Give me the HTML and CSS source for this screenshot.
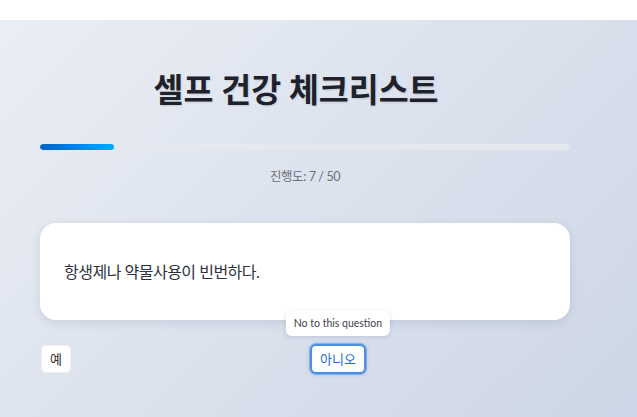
FILE: index.html
```html
<!DOCTYPE html>
<html lang="ko">
<head>
<meta charset="utf-8">
<title>셀프 건강 체크리스트</title>
<link rel="stylesheet" href="styles.css">
</head>
<body>
<div class="topbar"></div>
<main class="page">
  <div class="container">
    <h1 class="title">셀프 건강 체크리스트</h1>
    <div class="progress"><div class="progress-fill" style="width: 14%"></div></div>
    <p class="progress-text">진행도: 7 / 50</p>
    <div class="card">
      <p class="question">항생제나 약물사용이 빈번하다.</p>
    </div>
    <div class="answers">
      <div class="answer-cell">
        <button class="btn btn-yes">예</button>
      </div>
      <div class="answer-cell">
        <div class="btn-wrap">
          <span class="tooltip">No to this question</span>
          <button class="btn btn-focus">아니오</button>
        </div>
      </div>
    </div>
  </div>
</main>
</body>
</html>
```

FILE: styles.css
```css
* { box-sizing: border-box; }
html, body { margin: 0; padding: 0; }
body {
  font-family: Lato, "Noto Sans CJK KR", sans-serif;
  background: #ffffff;
  width: 637px;
  height: 417px;
  overflow: hidden;
}
.topbar { height: 20px; background: #ffffff; }
.page {
  height: 397px;
  background: linear-gradient(135deg, #eaeef5 0%, #dde3ee 45%, #cdd6e6 100%);
  padding-top: 50px;
}
.container { width: 530px; margin-left: 40px; }
.title {
  margin: 0;
  font-size: 32.5px;
  line-height: 40px;
  font-weight: 700;
  color: #1e222c;
  text-align: center;
  padding-right: 18px;
  text-shadow: 1px 1px 2px rgba(0, 0, 0, 0.12);
}
.progress {
  margin-top: 34px;
  height: 6px;
  border-radius: 3px;
  background: #e5e8ee;
  overflow: hidden;
}
.progress-fill {
  height: 100%;
  border-radius: 3px;
  background: linear-gradient(90deg, #0062c8, #00a8ff);
}
.progress-text {
  margin: 18px 0 0;
  font-size: 12.5px;
  line-height: 18px;
  letter-spacing: -0.4px;
  color: #6a6f78;
  text-align: center;
}
.card {
  margin-top: 37px;
  background: #ffffff;
  border-radius: 16px;
  padding: 36px 24px;
  box-shadow: 0 3px 10px rgba(40, 60, 100, 0.12);
}
.question {
  margin: 0;
  font-size: 16px;
  line-height: 25px;
  letter-spacing: -0.5px;
  color: #2c3240;
}
.answers {
  margin-top: 24px;
  display: grid;
  grid-template-columns: 1fr 1fr;
  column-gap: 10px;
  justify-items: start;
  align-items: center;
}
.btn-wrap { position: relative; display: inline-block; }
.btn {
  font-family: Lato, "Noto Sans CJK KR", sans-serif;
  font-size: 13px;
  line-height: 18px;
  padding: 4px 8px;
  border: 1px solid #eef0f4;
  border-radius: 5px;
  background: #ffffff;
  color: #2a2e36;
  cursor: pointer;
  display: block;
}
.btn-yes { margin-left: 1px; }
.btn-focus {
  border: 2px solid #4a8fe0;
  padding: 4px 8px;
  color: #1a6dd4;
  border-radius: 6px;
  box-shadow: 0 0 0 1px rgba(74, 143, 224, 0.45), 0 0 4px rgba(74, 143, 224, 0.5);
}
.tooltip {
  position: absolute;
  left: 50%;
  bottom: 100%;
  margin-bottom: 8px;
  transform: translateX(-50%);
  white-space: nowrap;
  background: #ffffff;
  color: #3d424b;
  font-size: 10.5px;
  line-height: 25px;
  padding: 0 8px;
  border-radius: 6px;
  box-shadow: 0 1px 4px rgba(40, 60, 100, 0.15);
}
```
